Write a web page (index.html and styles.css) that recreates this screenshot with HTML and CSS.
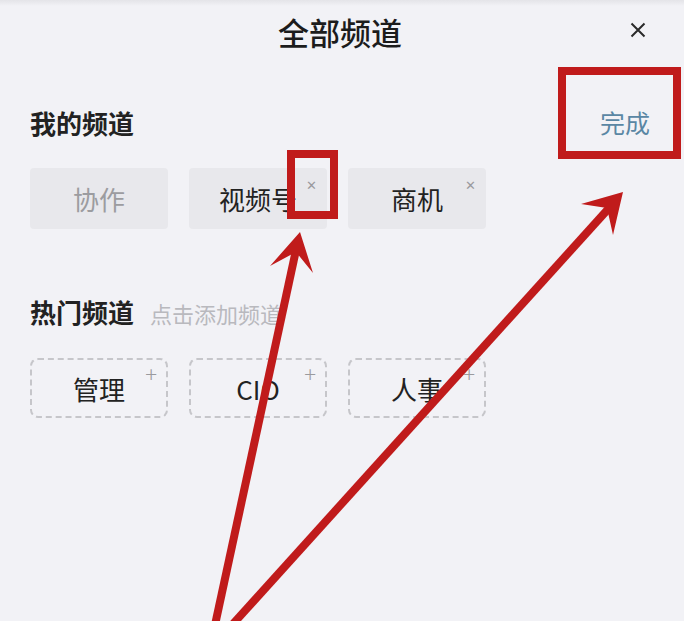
FILE: index.html
```html
<!DOCTYPE html>
<html lang="zh-CN">
<head>
  <meta charset="UTF-8" />
  <title>全部频道</title>
  <link rel="stylesheet" href="styles.css">
</head>
<body>
  <div class="sheet">
    <div class="header">
      <span></span>
      <h1 class="title">全部频道</h1>
      <button class="close">
        <svg width="16" height="16" viewBox="0 0 16 16"><path d="M1.5 1.5L14.5 14.5M14.5 1.5L1.5 14.5" /></svg>
      </button>
    </div>

    <div class="section-head">
      <h2>我的频道</h2>
      <button class="done">完成</button>
    </div>
    <div class="chips">
      <div class="chip disabled">协作</div>
      <div class="chip">视频号<span class="remove">&#x2715;</span></div>
      <div class="chip">商机<span class="remove">&#x2715;</span></div>
    </div>

    <div class="section-head hot">
      <h2>热门频道 <small>点击添加频道</small></h2>
    </div>
    <div class="chips hot-chips">
      <div class="chip add">管理<span class="plus">+</span></div>
      <div class="chip add">CIO<span class="plus">+</span></div>
      <div class="chip add">人事<span class="plus">+</span></div>
    </div>
  </div>

  <!-- annotations drawn over the screenshot -->
  <div class="mark mark-done"></div>
  <div class="mark mark-remove"></div>
  <svg class="arrows" width="684" height="621" viewBox="0 0 684 621">
    <line x1="215" y1="625" x2="296" y2="250" />
    <polygon points="300,232 270,266 296,252 313,273" />
    <line x1="232" y1="625" x2="610" y2="207" />
    <polygon points="623,192 581,204 607,208 613,235" />
  </svg>
</body>
</html>
```

FILE: styles.css
```css
body {
  margin: 0;
  width: 684px;
  height: 621px;
  overflow: hidden;
  position: relative;
  font-family: "Noto Sans CJK SC", "Noto Sans", sans-serif;
  background: linear-gradient(#e4e4e8, #f2f2f6 6px);
  color: #222;
}
.sheet {
  padding: 0 34px 0 30px;
}
.header {
  height: 66px;
  display: grid;
  grid-template-columns: 1fr auto 1fr;
  align-items: center;
}
.title {
  margin: -4px 0 0;
  font-size: 31px;
  font-weight: 500;
  color: #1c1c1c;
}
.close {
  justify-self: end;
  margin: -6px 4px 0 0;
  border: none;
  background: none;
  padding: 0;
  display: flex;
}
.close path {
  stroke: #2a2a2a;
  stroke-width: 2;
  fill: none;
}
.section-head {
  margin-top: 32px;
  height: 48px;
  display: flex;
  align-items: center;
  justify-content: space-between;
}
.section-head h2 {
  margin: 0;
  font-size: 26px;
  font-weight: 700;
  color: #222;
}
.section-head small {
  margin-left: 10px;
  font-size: 22px;
  font-weight: 400;
  color: #b9b9be;
}
.done {
  border: none;
  background: none;
  padding: 0;
  font-family: inherit;
  font-size: 25px;
  color: #5a87a4;
}
.chips {
  margin-top: 22px;
  display: flex;
  gap: 21px;
}
.chip {
  position: relative;
  width: 138px;
  height: 61px;
  box-sizing: border-box;
  display: flex;
  align-items: center;
  justify-content: center;
  background: #e8e8ec;
  border-radius: 4px;
  font-size: 26px;
  color: #222;
}
.chip.disabled {
  color: #9c9ca0;
}
.remove, .plus {
  position: absolute;
  top: 7px;
  right: 10px;
  font-size: 13px;
  color: #9a9a9e;
}
.plus {
  top: 2px;
  right: 9px;
  font-size: 22px;
  font-weight: 300;
  line-height: 1;
}
.section-head.hot {
  margin-top: 58px;
}
.hot-chips {
  margin-top: 23px;
}
.chip.add {
  height: 60px;
  background: transparent;
  border: 2px dashed #c6c6ca;
  border-radius: 8px;
}
.mark {
  position: absolute;
  border: 8px solid #c01b1b;
}
.mark-done {
  left: 558px;
  top: 67px;
  width: 107px;
  height: 76px;
}
.mark-remove {
  left: 287px;
  top: 150px;
  width: 35px;
  height: 53px;
}
.arrows {
  position: absolute;
  left: 0;
  top: 0;
  pointer-events: none;
}
.arrows line {
  stroke: #c01b1b;
  stroke-width: 8;
}
.arrows polygon {
  fill: #c01b1b;
}
```
